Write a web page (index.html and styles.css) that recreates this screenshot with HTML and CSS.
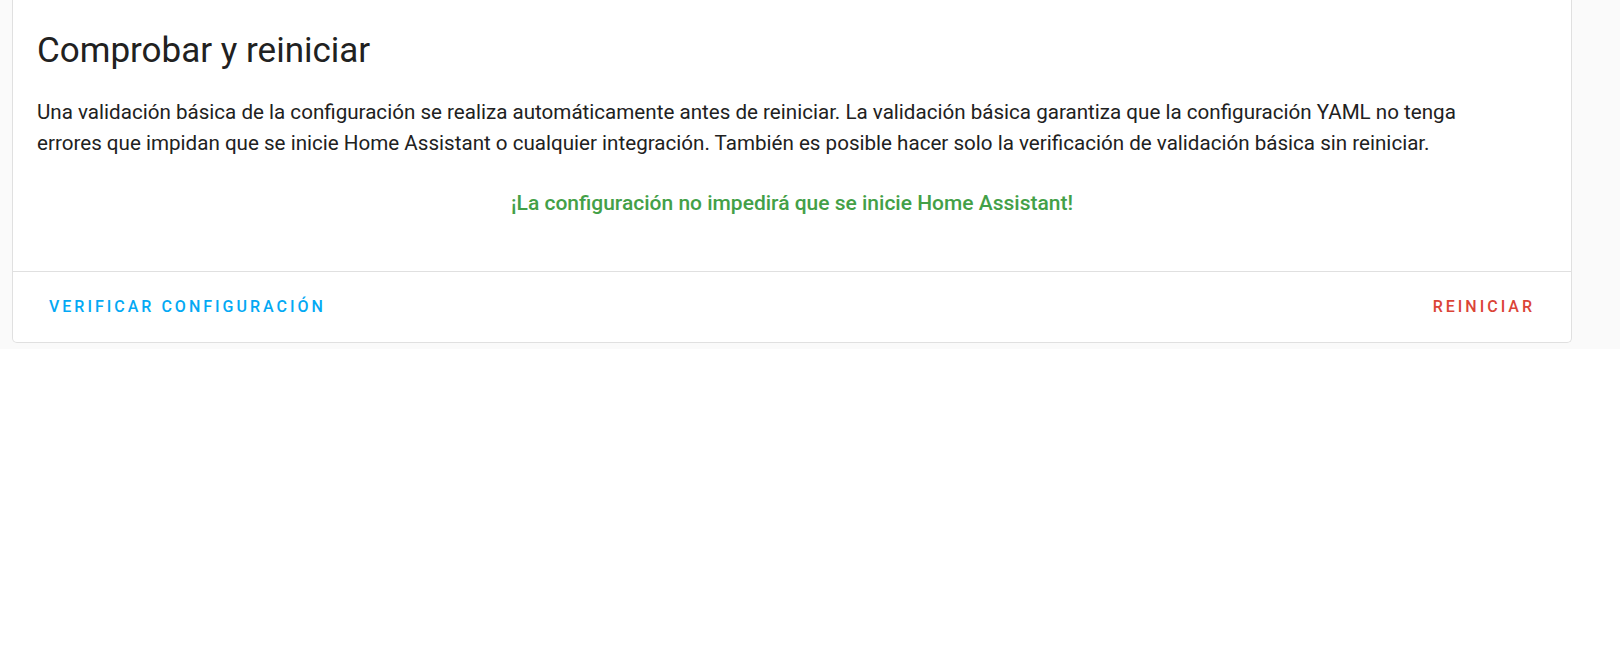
FILE: index.html
```html
<!DOCTYPE html>
<html>
<head>
	<title>Comprobar y reiniciar</title>
	<link rel="stylesheet" href="styles.css">
</head>
<body>
	<main class="page">
		<section class="card">
			<h1 class="card-title">Comprobar y reiniciar</h1>
			<div class="card-content">
				<p class="intro">Una validación básica de la configuración se realiza automáticamente antes de reiniciar. La validación básica garantiza que la configuración YAML no tenga errores que impidan que se inicie Home Assistant o cualquier integración. También es posible hacer solo la verificación de validación básica sin reiniciar.</p>
				<p class="result">¡La configuración no impedirá que se inicie Home Assistant!</p>
			</div>
			<footer class="card-actions">
				<button type="button" class="btn btn-check">Verificar configuración</button>
				<button type="button" class="btn btn-restart">Reiniciar</button>
			</footer>
		</section>
	</main>
</body>
</html>
```

FILE: styles.css
```css
*{
	margin: 0;
	padding: 0;
	box-sizing: border-box;
}
body{
	font-family: Roboto, "Noto Sans", sans-serif;
	color: #212121;
	background: #fff;
}
.page{
	background: #fafafa;
	padding: 0 48px 6px 12px;
}
.card{
	background: #fff;
	border: 1px solid #e0e0e0;
	border-top: none;
	border-radius: 0 0 5px 5px;
}
.card-title{
	font-size: 35px;
	font-weight: 400;
	line-height: 40px;
	padding: 31px 24px 0;
}
.card-content{
	padding: 26px 24px 53px;
}
.intro{
	font-size: 20.6px;
	line-height: 31px;
	padding-right: 36px;
}
.result{
	margin-top: 29px;
	font-size: 21px;
	font-weight: 500;
	line-height: 30px;
	text-align: center;
	color: #43a047;
}
.card-actions{
	display: flex;
	justify-content: space-between;
	align-items: center;
	height: 71px;
	padding: 0 24px;
	border-top: 1px solid #e0e0e0;
}
.btn{
	background: none;
	border: none;
	outline: none;
	font-family: Roboto, "Noto Sans", sans-serif;
	font-size: 16px;
	font-weight: 500;
	line-height: 20px;
	letter-spacing: 3px;
	text-transform: uppercase;
	padding: 0 12px;
}
.btn-check{
	color: #03a9f4;
}
.btn-restart{
	color: #db4437;
}
```
